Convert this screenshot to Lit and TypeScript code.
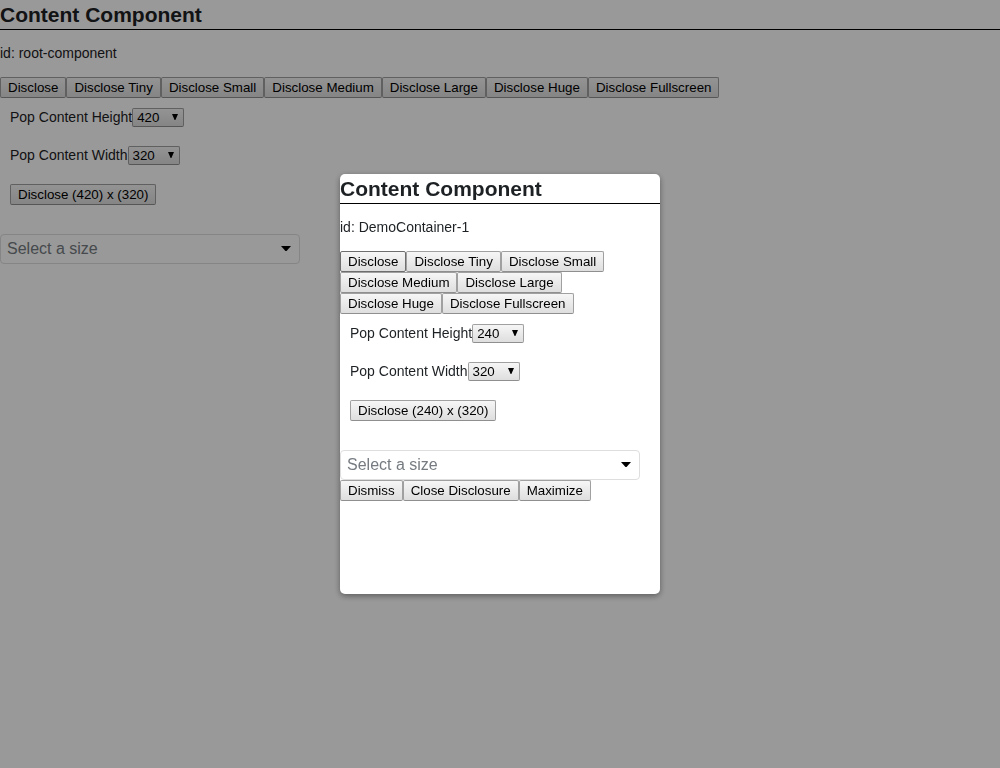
import { LitElement, html, css } from "lit";
import { customElement, property } from "lit/decorators.js";

const SIZES = ["Tiny", "Small", "Medium", "Large", "Huge", "Fullscreen"];
const DIMENSIONS = [240, 320, 420, 480, 640];

@customElement("native-choice")
class NativeChoice extends LitElement {
  @property() label = "";
  @property({ type: Number }) value = 320;

  static styles = css`
    :host { display: block; }
    .row { display: flex; align-items: center; }
    .box { position: relative; display: flex; }
    .select {
      appearance: none;
      box-sizing: border-box;
      width: 52px;
      height: 19px;
      margin: 0;
      padding: 0 4px;
      border: 1px solid #a0a0a0;
      border-bottom-color: #8f8f8f;
      border-radius: 2px;
      background: linear-gradient(#f6f6f6, #dedede);
      color: #000;
      font-family: "Liberation Sans", Arial, sans-serif;
    }
    .arrow {
      position: absolute;
      right: 6px;
      top: 6px;
      width: 6px;
      height: 6px;
      pointer-events: none;
    }
  `;

  private onChange(e: Event) {
    this.value = Number((e.target as HTMLSelectElement).value);
    this.dispatchEvent(new CustomEvent("pick", { detail: this.value }));
  }

  render() {
    return html`<div class="row">
      <label for="choice">${this.label}</label>
      <span class="box">
        <select id="choice" class="select" @change=${this.onChange}>
          ${DIMENSIONS.map((d) => html`<option value=${d} ?selected=${d === this.value}>${d}</option>`)}
        </select>
        <svg class="arrow" viewBox="0 0 6 6" aria-hidden="true"><path d="M0 0H6L3.4 6H2.6Z" /></svg>
      </span>
    </div>`;
  }
}

@customElement("content-panel")
class ContentPanel extends LitElement {
  @property() name = "";
  @property({ type: Number }) popHeight = 420;
  @property({ type: Number }) popWidth = 320;
  @property({ type: Boolean }) disclosed = false;

  static styles = css`
    :host { display: block; }
    .title {
      margin: 0;
      border-bottom: 1px solid #000;
      font-size: 21px;
      line-height: 29px;
      font-weight: 700;
    }
    .id { margin: 14px 0; }
    .buttons { display: flex; flex-wrap: wrap; }
    .button {
      box-sizing: border-box;
      height: 21px;
      margin: 0;
      padding: 0 7px;
      border: 1px solid #a0a0a0;
      border-bottom-color: #8f8f8f;
      border-radius: 2px;
      background: linear-gradient(#f6f6f6, #dedede);
      color: #000;
      font-family: "Liberation Sans", Arial, sans-serif;
      white-space: nowrap;
    }
    .button.current { border-color: #6e6e6e; }
    .settings {
      display: flex;
      flex-direction: column;
      align-items: flex-start;
      gap: 19px;
      padding: 10px;
      margin-bottom: 19px;
    }
    .size { position: relative; width: 300px; max-width: 100%; }
    .size-select {
      appearance: none;
      display: block;
      box-sizing: border-box;
      width: 100%;
      height: 30px;
      margin: 0;
      padding: 0 28px 2px 6px;
      border: 1px solid #dedede;
      border-radius: 4px;
      background: #fff;
      color: #757b80;
      font-family: "Liberation Sans", Arial, sans-serif;
      font-size: 16px;
    }
    .size-arrow {
      position: absolute;
      right: 9px;
      top: 12px;
      width: 10px;
      height: 5px;
      pointer-events: none;
    }
  `;

  render() {
    return html`
      <h1 class="title">Content Component</h1>
      <p class="id">id: ${this.name}</p>
      <div class="buttons">
        <button type="button" class="button ${this.disclosed ? "current" : ""}">Disclose</button>
        ${SIZES.map((s) => html`<button type="button" class="button">Disclose ${s}</button>`)}
      </div>
      <div class="settings">
        <native-choice label="Pop Content Height" .value=${this.popHeight}
          @pick=${(e: CustomEvent) => (this.popHeight = e.detail)}></native-choice>
        <native-choice label="Pop Content Width" .value=${this.popWidth}
          @pick=${(e: CustomEvent) => (this.popWidth = e.detail)}></native-choice>
        <button type="button" class="button">Disclose (${this.popHeight}) x (${this.popWidth})</button>
      </div>
      <div class="size">
        <select class="size-select" aria-label="Select a size">
          <option value="" selected>Select a size</option>
          ${SIZES.map((s) => html`<option>${s}</option>`)}
        </select>
        <svg class="size-arrow" viewBox="0 0 10 5" aria-hidden="true"><path d="M0 0H10L6 4.4Q5 5.4 4 4.4Z" /></svg>
      </div>
      ${this.disclosed
        ? html`<div class="buttons">
            <button type="button" class="button">Dismiss</button>
            <button type="button" class="button">Close Disclosure</button>
            <button type="button" class="button">Maximize</button>
          </div>`
        : null}
    `;
  }
}

@customElement("app-root")
class AppRoot extends LitElement {
  static styles = css`
    :host {
      display: block;
      min-height: 100vh;
      background: #fff;
      color: #1d2124;
      font-family: "Liberation Sans", Arial, sans-serif;
      font-size: 14px;
      line-height: 19px;
    }
    .backdrop {
      position: fixed;
      inset: 0;
      display: grid;
      place-items: center;
      background: rgba(0, 0, 0, 0.4);
    }
    .popup {
      width: 320px;
      max-width: 100%;
      height: 420px;
      max-height: 100%;
      overflow: auto;
      border-radius: 5px;
      background: #fff;
      box-shadow: 0 2px 6px rgba(0, 0, 0, 0.4);
    }
  `;

  render() {
    return html`
      <content-panel name="root-component"></content-panel>
      <div class="backdrop">
        <div class="popup" role="dialog" aria-modal="true" aria-label="Content Component">
          <content-panel name="DemoContainer-1" .popHeight=${240} disclosed></content-panel>
        </div>
      </div>
    `;
  }
}
